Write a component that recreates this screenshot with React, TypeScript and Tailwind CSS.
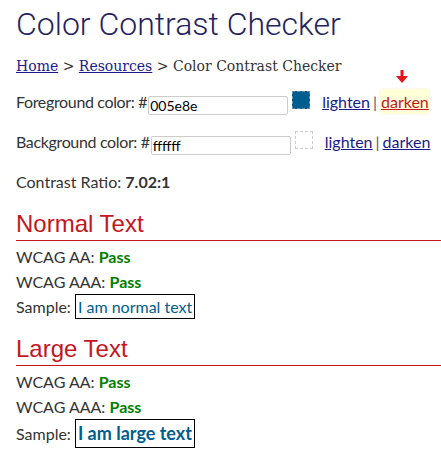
function ColorRow({
  label,
  value,
  swatch,
  arrow,
}: {
  label: string
  value: string
  swatch: string
  arrow?: boolean
}) {
  return (
    <div className="flex items-center h-[24px] whitespace-nowrap">
      <span className="shrink-0 text-[16px] tracking-[-0.35px] text-[#333]">{label} #</span>
      <input
        readOnly
        value={value}
        className="shrink-0 ml-[1px] mt-[6px] w-[140px] h-[19px] border border-[#ccc] rounded-[2px] px-[1px] text-[14px] text-black outline-none font-['Lato',sans-serif]"
      />
      <span
        className={
          swatch === "#005e8e"
            ? "shrink-0 ml-[4px] -mt-[5px] w-[18px] h-[18px] border border-dashed border-[#6a8fa8] bg-[#005e8e]"
            : "shrink-0 ml-[4px] -mt-[5px] w-[18px] h-[18px] border border-dashed border-[#ccc] bg-white"
        }
      />
      <a href="#" className="ml-[12px] text-[#1a1a8c] underline">
        lighten
      </a>
      <span className="mx-[3px] text-[#555]">|</span>
      <span className="relative">
        {arrow && (
          <svg
            className="absolute left-[16px] -top-[20px]"
            width="12"
            height="14"
            viewBox="0 0 12 14"
          >
            <rect x="4.5" y="0" width="3" height="7" fill="#e8141c" />
            <polygon points="0,6 12,6 6,13" fill="#e8141c" />
          </svg>
        )}
        <a
          href="#"
          className={
            arrow
              ? "bg-[#ffffd9] rounded-[3px] px-[1px] py-[3px] text-[#c4161c] underline shadow-[0_0_2px_#e6e6c0]"
              : "text-[#1a1a8c] underline"
          }
        >
          darken
        </a>
      </span>
    </div>
  )
}

function Section({ title, large }: { title: string; large?: boolean }) {
  return (
    <div>
      <h2 className="text-[24px] leading-[28px] text-[#c4161c] font-['Liberation_Sans',Arial,sans-serif] border-b border-[#c4161c] pb-[2px] -mr-4">
        {title}
      </h2>
      <div className="mt-[3px] leading-[25px]">
        <div>
          WCAG AA: <b className="text-[#008000]">Pass</b>
        </div>
        <div>
          WCAG AAA: <b className="text-[#008000]">Pass</b>
        </div>
        <div className="flex items-center">
          <span>Sample:</span>
          <span
            className={
              large
                ? "ml-[4px] border border-black px-[2px] text-[#005e8e] text-[18px] font-bold leading-[27px]"
                : "ml-[4px] border border-black px-[2px] text-[#005e8e] leading-[23px]"
            }
          >
            {large ? "I am large text" : "I am normal text"}
          </span>
        </div>
      </div>
    </div>
  )
}

export default function App() {
  return (
    <div className="bg-white w-[441px] h-[459px] overflow-hidden px-4 font-['Lato',sans-serif] text-[16px] text-[#333]">
      <h1 className="pt-[4px] text-[32px] leading-[40px] font-light text-[#24245e] font-['Roboto',sans-serif]">
        Color Contrast Checker
      </h1>
      <div className="mt-[12px] text-[14px] text-[#333] font-['DejaVu_Serif',serif]">
        <a href="#" className="text-[#1a1a8c] underline">
          Home
        </a>{" "}
        &gt;{" "}
        <a href="#" className="text-[#1a1a8c] underline">
          Resources
        </a>{" "}
        &gt; Color Contrast Checker
      </div>
      <div className="mt-[13px]">
        <ColorRow label="Foreground color:" value="005e8e" swatch="#005e8e" arrow />
      </div>
      <div className="mt-[16px]">
        <ColorRow label="Background color:" value="ffffff" swatch="#ffffff" />
      </div>
      <div className="mt-[16px]">
        Contrast Ratio: <b>7.02:1</b>
      </div>
      <div className="mt-[16px]">
        <Section title="Normal Text" />
      </div>
      <div className="mt-[16px]">
        <Section title="Large Text" large />
      </div>
    </div>
  )
}
